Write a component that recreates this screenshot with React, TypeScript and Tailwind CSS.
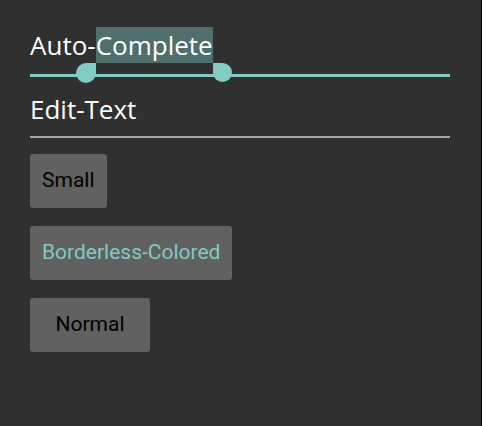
import React from "react";

const Handle = ({ side }: { side: "left" | "right" }) => (
  <span
    className={
      side === "left"
        ? "absolute top-full -left-[20px] w-[20px] h-[20px] rounded-full rounded-tr-none bg-[#80cbc4]"
        : "absolute top-full -right-[19px] w-[19px] h-[19px] rounded-full rounded-tl-none bg-[#80cbc4]"
    }
  />
);

const Button = ({ label, className }: { label: string; className?: string }) => (
  <button
    className={
      "h-[54px] px-3 rounded-[3px] bg-[#616161] text-[21px] font-['Roboto',sans-serif] text-black text-center " +
      (className ?? "")
    }
  >
    {label}
  </button>
);

export default function App() {
  return (
    <div className="w-[482px] h-[426px] bg-[#303030] border-r border-black font-['Open_Sans',sans-serif]">
      <div className="pl-[30px] pr-[31px] pt-[27px]">
        {/* Auto-Complete with selection */}
        <div className="relative z-10 h-9 text-[26px] leading-9 text-white whitespace-nowrap">
          Auto-
          <span className="relative inline-block h-9 bg-[#4f6f6c]">
            Complete
            <Handle side="left" />
            <Handle side="right" />
          </span>
        </div>
        <div className="mt-[11px] h-[3px] bg-[#80cbc4]" />

        {/* Edit-Text */}
        <div className="mt-[14px] h-9 text-[26px] leading-9 text-white">Edit-Text</div>
        <div className="mt-[9px] h-[2px] bg-[#a6a6a6]" />

        {/* Buttons */}
        <div className="mt-[16px] flex flex-col items-start gap-[18px]">
          <Button label="Small" />
          <Button label="Borderless-Colored" className="!text-[#80cbc4]" />
          <Button label="Normal" className="min-w-[120px]" />
        </div>
      </div>
    </div>
  );
}
